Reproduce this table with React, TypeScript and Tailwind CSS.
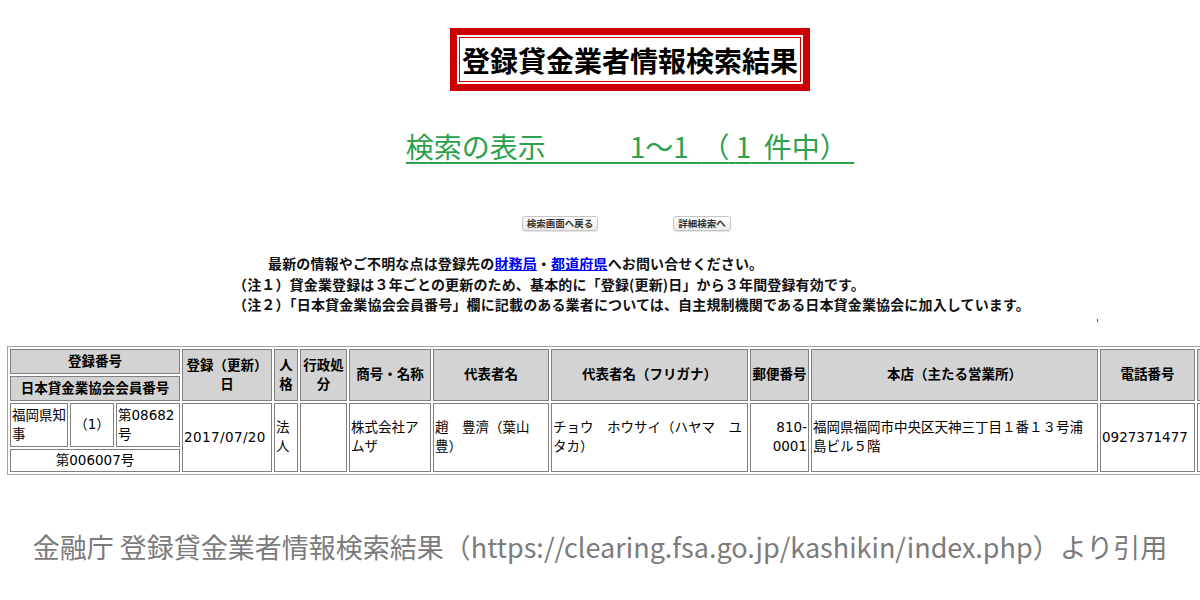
import React from "react";

const th = "border border-[#808080] bg-[#d3d3d3] p-[1px] text-center font-bold align-middle";
const td = "border border-[#808080] bg-white p-[1px] align-middle";

function ResultTable() {
  return (
    <table className="ml-[7px] table-fixed w-[1273px] border-separate border-spacing-[2px] border border-[#a0a0a0] font-['DejaVu_Sans','Noto_Sans_CJK_JP',sans-serif] text-[13.5px] leading-[19px] text-black">
      <colgroup>
        <col className="w-[58px]" />
        <col className="w-[44px]" />
        <col className="w-[64px]" />
        <col className="w-[90px]" />
        <col className="w-[24px]" />
        <col className="w-[47px]" />
        <col className="w-[82px]" />
        <col className="w-[116px]" />
        <col className="w-[197px]" />
        <col className="w-[59px]" />
        <col className="w-[287px]" />
        <col className="w-[95px]" />
        <col className="w-[80px]" />
      </colgroup>
      <tbody>
        <tr>
          <td colSpan={3} className={`${th} h-[25px]`}>登録番号</td>
          <td rowSpan={2} className={th}>登録（更新）<br />日</td>
          <td rowSpan={2} className={th}>人<br />格</td>
          <td rowSpan={2} className={th}>行政処<br />分</td>
          <td rowSpan={2} className={th}>商号・名称</td>
          <td rowSpan={2} className={th}>代表者名</td>
          <td rowSpan={2} className={th}>代表者名（フリガナ）</td>
          <td rowSpan={2} className={th}>郵便番号</td>
          <td rowSpan={2} className={th}>本店（主たる営業所）</td>
          <td rowSpan={2} className={th}>電話番号</td>
          <td rowSpan={2} className={th}></td>
        </tr>
        <tr>
          <td colSpan={3} className={`${th} h-[25px]`}>日本貸金業協会会員番号</td>
        </tr>
        <tr>
          <td className={`${td} h-[44px]`}>福岡県知<br />事</td>
          <td className={`${td} text-center`}>（1）</td>
          <td className={td}>第08682<br />号</td>
          <td rowSpan={2} className={`${td} tracking-[0.4px]`}>2017/07/20</td>
          <td rowSpan={2} className={td}>法<br />人</td>
          <td rowSpan={2} className={td}></td>
          <td rowSpan={2} className={td}>株式会社ア<br />ムザ</td>
          <td rowSpan={2} className={td}>趙　豊濟（葉山<br />豊）</td>
          <td rowSpan={2} className={td}>チョウ　ホウサイ（ハヤマ　ユ<br />タカ）</td>
          <td rowSpan={2} className={`${td} text-right`}>810-<br />0001</td>
          <td rowSpan={2} className={td}>福岡県福岡市中央区天神三丁目１番１３号浦<br />島ビル５階</td>
          <td rowSpan={2} className={td}>0927371477</td>
          <td rowSpan={2} className={td}></td>
        </tr>
        <tr>
          <td colSpan={3} className={`${td} h-[23px] text-center`}>第006007号</td>
        </tr>
      </tbody>
    </table>
  );
}

export default function App() {
  return (
    <div className="w-[1200px] h-[600px] overflow-hidden bg-white font-['Noto_Sans_CJK_JP',sans-serif] text-black">
      <div className="w-[1260px] flex flex-col items-center">
        <div className="mt-[28px] border-[7px] border-[#cc0000] p-[2px]">
          <div className="h-[45px] flex items-center border border-[#cc0000] px-[2px] text-[28px] font-bold leading-none">
            登録貸金業者情報検索結果
          </div>
        </div>
        <a className="mt-[38px] text-[28px] leading-[34px] text-[#2ba14b] underline decoration-2 underline-offset-[4px]">
          検索の表示　　　1〜1{"\u00a0\u00a0"}（{"\u00a0"}1{"\u00a0\u00a0"}件中）{"\u00a0"}
        </a>
        <div className="mt-[53px] flex gap-[75px] pr-[7px]">
          <button className="h-[15px] w-[76px] rounded-[3px] border border-[#c6c6c6] bg-gradient-to-b from-white to-[#ececec] text-[9.5px] font-bold leading-[13px] text-[#333] shadow-[0_1px_1px_rgba(0,0,0,0.12)]">
            検索画面へ戻る
          </button>
          <button className="h-[15px] w-[58px] rounded-[3px] border border-[#c6c6c6] bg-gradient-to-b from-white to-[#ececec] text-[9.5px] font-bold leading-[13px] text-[#333] shadow-[0_1px_1px_rgba(0,0,0,0.12)]">
            詳細検索へ
          </button>
        </div>
      </div>

      <div className="mt-[22px] pl-[233px] text-[14px] font-bold leading-[20.5px] tracking-[0.15px] text-[#111]">
        <p className="pl-[35px]">
          最新の情報やご不明な点は登録先の
          <a className="text-[#0000ee] underline">財務局</a>・
          <a className="text-[#0000ee] underline">都道府県</a>
          へお問い合せください。
        </p>
        <p>（注１）貸金業登録は３年ごとの更新のため、基本的に「登録(更新)日」から３年間登録有効です。</p>
        <p>（注２）「日本貸金業協会会員番号」欄に記載のある業者については、自主規制機関である日本貸金業協会に加入しています。</p>
      </div>

      <div className="h-[31px] pt-[4px] pl-[1097px]">
        <div className="h-[3px] w-px bg-[#555]" />
      </div>

      <ResultTable />

      <div className="mt-[54px] text-center text-[27px] leading-[36px] text-[#7b7b7b]">
        金融庁 登録貸金業者情報検索結果（https://clearing.fsa.go.jp/kashikin/index.php）より引用
      </div>
    </div>
  );
}
